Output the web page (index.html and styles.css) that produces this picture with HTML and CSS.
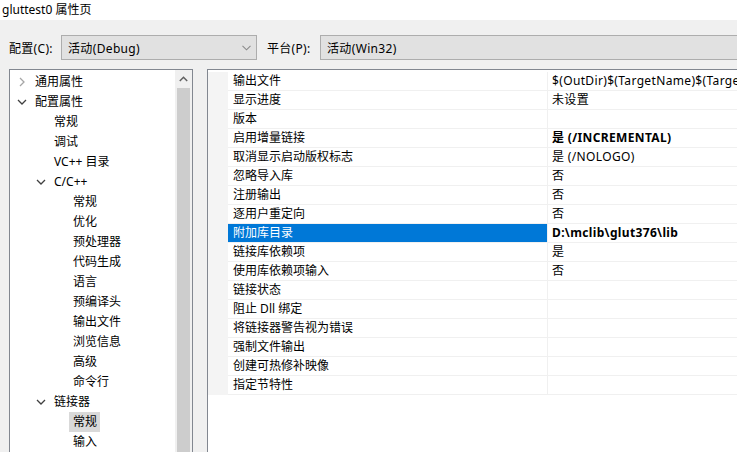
FILE: index.html
```html
<!DOCTYPE html>
<html lang="zh-CN">

<head>
  <meta charset="UTF-8">
  <meta name="viewport" content="width=device-width, initial-scale=1.0">
  <title>gluttest0 属性页</title>
  <link rel="stylesheet" href="styles.css">
</head>

<body>
  <div class="title-bar">gluttest0 属性页</div>

  <div class="dialog">
    <div class="config-row">
      <span class="config-label">配置(C):</span>
      <div class="combo combo-config">
        <span>活动(Debug)</span>
        <svg class="combo-arrow" width="9" height="6" viewBox="0 0 9 6">
          <polyline points="0.5,0.8 4.5,4.8 8.5,0.8" fill="none" stroke="#8a8a8a" stroke-width="1.1" />
        </svg>
      </div>
      <span class="config-label platform-label">平台(P):</span>
      <div class="combo combo-platform">
        <span>活动(Win32)</span>
      </div>
    </div>

    <div class="panes">
      <!-- category tree -->
      <div class="tree">
        <ul class="tree-list">
          <li class="node level-0">
            <span class="twisty">
              <svg width="12" height="12" viewBox="0 0 12 12"><polyline points="4,2 8,6 4,10" fill="none" stroke="#a6a6a6" stroke-width="1.3" /></svg>
            </span>
            <span class="node-text">通用属性</span>
          </li>
          <li class="node level-0">
            <span class="twisty">
              <svg width="12" height="12" viewBox="0 0 12 12"><polyline points="2,4 6,8 10,4" fill="none" stroke="#404040" stroke-width="1.3" /></svg>
            </span>
            <span class="node-text">配置属性</span>
          </li>
          <li class="node level-1"><span class="twisty"></span><span class="node-text">常规</span></li>
          <li class="node level-1"><span class="twisty"></span><span class="node-text">调试</span></li>
          <li class="node level-1"><span class="twisty"></span><span class="node-text">VC++ 目录</span></li>
          <li class="node level-1">
            <span class="twisty">
              <svg width="12" height="12" viewBox="0 0 12 12"><polyline points="2,4 6,8 10,4" fill="none" stroke="#404040" stroke-width="1.3" /></svg>
            </span>
            <span class="node-text">C/C++</span>
          </li>
          <li class="node level-2"><span class="twisty"></span><span class="node-text">常规</span></li>
          <li class="node level-2"><span class="twisty"></span><span class="node-text">优化</span></li>
          <li class="node level-2"><span class="twisty"></span><span class="node-text">预处理器</span></li>
          <li class="node level-2"><span class="twisty"></span><span class="node-text">代码生成</span></li>
          <li class="node level-2"><span class="twisty"></span><span class="node-text">语言</span></li>
          <li class="node level-2"><span class="twisty"></span><span class="node-text">预编译头</span></li>
          <li class="node level-2"><span class="twisty"></span><span class="node-text">输出文件</span></li>
          <li class="node level-2"><span class="twisty"></span><span class="node-text">浏览信息</span></li>
          <li class="node level-2"><span class="twisty"></span><span class="node-text">高级</span></li>
          <li class="node level-2"><span class="twisty"></span><span class="node-text">命令行</span></li>
          <li class="node level-1">
            <span class="twisty">
              <svg width="12" height="12" viewBox="0 0 12 12"><polyline points="2,4 6,8 10,4" fill="none" stroke="#404040" stroke-width="1.3" /></svg>
            </span>
            <span class="node-text">链接器</span>
          </li>
          <li class="node level-2"><span class="twisty"></span><span class="node-text selected">常规</span></li>
          <li class="node level-2"><span class="twisty"></span><span class="node-text">输入</span></li>
        </ul>
        <div class="scrollbar">
          <div class="scroll-up">
            <svg width="9" height="6" viewBox="0 0 9 6"><polyline points="0.8,5 4.5,1.3 8.2,5" fill="none" stroke="#606060" stroke-width="1.5" /></svg>
          </div>
          <div class="scroll-thumb"></div>
        </div>
      </div>

      <!-- property grid -->
      <div class="grid">
        <div class="prop-row"><div class="gutter"></div><div class="prop-name">输出文件</div><div class="prop-value">$(OutDir)$(TargetName)$(TargetExt)</div></div>
        <div class="prop-row"><div class="gutter"></div><div class="prop-name">显示进度</div><div class="prop-value">未设置</div></div>
        <div class="prop-row"><div class="gutter"></div><div class="prop-name">版本</div><div class="prop-value"></div></div>
        <div class="prop-row"><div class="gutter"></div><div class="prop-name">启用增量链接</div><div class="prop-value bold">是 (/INCREMENTAL)</div></div>
        <div class="prop-row"><div class="gutter"></div><div class="prop-name">取消显示启动版权标志</div><div class="prop-value">是 (/NOLOGO)</div></div>
        <div class="prop-row"><div class="gutter"></div><div class="prop-name">忽略导入库</div><div class="prop-value">否</div></div>
        <div class="prop-row"><div class="gutter"></div><div class="prop-name">注册输出</div><div class="prop-value">否</div></div>
        <div class="prop-row"><div class="gutter"></div><div class="prop-name">逐用户重定向</div><div class="prop-value">否</div></div>
        <div class="prop-row selected"><div class="gutter"></div><div class="prop-name">附加库目录</div><div class="prop-value bold">D:\mclib\glut376\lib</div></div>
        <div class="prop-row"><div class="gutter"></div><div class="prop-name">链接库依赖项</div><div class="prop-value">是</div></div>
        <div class="prop-row"><div class="gutter"></div><div class="prop-name">使用库依赖项输入</div><div class="prop-value">否</div></div>
        <div class="prop-row"><div class="gutter"></div><div class="prop-name">链接状态</div><div class="prop-value"></div></div>
        <div class="prop-row"><div class="gutter"></div><div class="prop-name">阻止 Dll 绑定</div><div class="prop-value"></div></div>
        <div class="prop-row"><div class="gutter"></div><div class="prop-name">将链接器警告视为错误</div><div class="prop-value"></div></div>
        <div class="prop-row"><div class="gutter"></div><div class="prop-name">强制文件输出</div><div class="prop-value"></div></div>
        <div class="prop-row"><div class="gutter"></div><div class="prop-name">创建可热修补映像</div><div class="prop-value"></div></div>
        <div class="prop-row"><div class="gutter"></div><div class="prop-name">指定节特性</div><div class="prop-value"></div></div>
      </div>
    </div>
  </div>
</body>

</html>
```

FILE: styles.css
```css
* {
  box-sizing: border-box;
}

body {
  margin: 0;
  width: 737px;
  height: 452px;
  overflow: hidden;
  font-family: 'Noto Sans', 'Noto Sans CJK SC', sans-serif;
  font-size: 12px;
  color: #000;
  background-color: #f0f0f0;
}

.title-bar {
  height: 20px;
  line-height: 20px;
  padding-left: 2px;
  background-color: #fff;
}

.dialog {
  height: 432px;
  background-color: #f0f0f0;
}

.config-row {
  display: flex;
  align-items: center;
  padding: 15px 0 0 9px;
  height: 40px;
}

.config-label {
  width: 52px;
  flex-shrink: 0;
  letter-spacing: 0.3px;
}

.platform-label {
  width: 53px;
  margin-left: 10px;
}

.combo {
  display: flex;
  align-items: center;
  justify-content: space-between;
  flex-shrink: 0;
  height: 25px;
  padding: 0 5px 0 6px;
  border: 1px solid #adadad;
  background-color: #e1e1e1;
  white-space: nowrap;
  letter-spacing: 0.35px;
}

.combo-config {
  width: 196px;
}

.combo-platform {
  width: 440px;
}

.panes {
  display: flex;
  margin-top: 9px;
  height: 400px;
}

/* tree */
.tree {
  display: flex;
  flex-shrink: 0;
  width: 184px;
  margin-left: 9px;
  border: 1px solid #828790;
  background-color: #fff;
}

.tree-list {
  flex: 1;
  list-style: none;
  margin: 0;
  padding: 2px 0 0 0;
}

.node {
  display: flex;
  align-items: center;
  height: 20px;
  white-space: nowrap;
}

.level-0 {
  padding-left: 6px;
}

.level-1 {
  padding-left: 25px;
}

.level-2 {
  padding-left: 44px;
}

.twisty {
  display: flex;
  align-items: center;
  width: 19px;
  height: 20px;
  flex-shrink: 0;
}

.node-text {
  line-height: 20px;
}

.node-text.selected {
  background-color: #d9d9d9;
  padding: 0 3px 0 4px;
  margin-left: -4px;
}

.scrollbar {
  display: flex;
  flex-direction: column;
  width: 17px;
  background-color: #f0f0f0;
}

.scroll-up {
  display: flex;
  align-items: center;
  justify-content: center;
  height: 18px;
}

.scroll-thumb {
  flex: 1;
  margin: 0 2px;
  background-color: #cdcdcd;
}

/* property grid */
.grid {
  flex: 1;
  margin-left: 14px;
  padding-top: 2px;
  border-left: 1px solid #828790;
  border-top: 1px solid #828790;
  background-color: #fff;
  overflow: hidden;
}

.prop-row {
  display: flex;
  height: 19px;
}

.gutter {
  width: 20px;
  flex-shrink: 0;
  background-color: #f4f4f4;
}

.prop-name {
  width: 320px;
  flex-shrink: 0;
  padding-left: 5px;
  line-height: 18px;
  border-right: 1px solid #f0f0f0;
  border-bottom: 1px solid #f0f0f0;
  white-space: nowrap;
}

.prop-value {
  flex: 1;
  padding-left: 4px;
  line-height: 18px;
  border-bottom: 1px solid #f0f0f0;
  white-space: nowrap;
  overflow: hidden;
  letter-spacing: 0.35px;
}

.prop-value.bold {
  font-weight: bold;
}

.prop-row.selected .prop-name {
  background-color: #0078d7;
  color: #fff;
}
```
